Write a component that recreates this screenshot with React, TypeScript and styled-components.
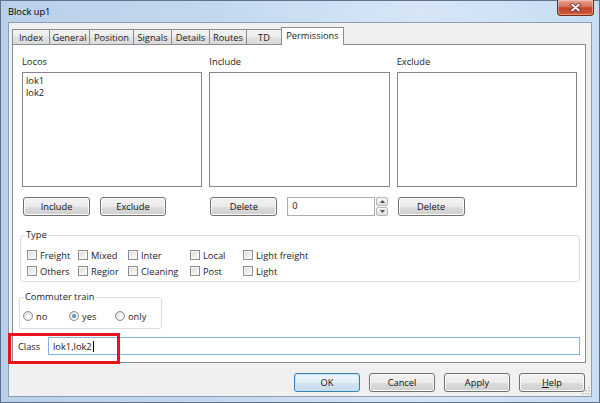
import React from 'react';
import styled, { createGlobalStyle } from 'styled-components';

const GlobalStyle = createGlobalStyle`
  html, body {
    margin: 0;
    padding: 0;
    background: #ffffff;
  }
  body {
    font-family: 'Open Sans', 'Noto Sans', sans-serif;
    font-size: 9.3px;
    color: #1b1b1b;
  }
  * {
    box-sizing: border-box;
  }
`;

const Window = styled.div`
  position: relative;
  width: 600px;
  height: 403px;
  display: flex;
  flex-direction: column;
  background: linear-gradient(90deg, #b9d0ea 0%, #c3d8ee 35%, #d6e6f7 70%, #c8dcf1 100%);
  box-shadow: inset 0 0 0 1px #62728a;
  overflow: hidden;
`;

const TitleBar = styled.div`
  height: 22px;
  display: flex;
  align-items: flex-start;
  padding-left: 8px;
`;

const Title = styled.span`
  line-height: 24px;
  color: #000;
`;

const CloseButton = styled.div`
  margin-left: auto;
  margin-right: 6px;
  width: 37px;
  height: 16px;
  border: 1px solid #6e2a1d;
  border-top: none;
  border-radius: 0 0 4px 4px;
  background: linear-gradient(#e8a594 0%, #d7705a 45%, #c2412a 52%, #cf5a3e 100%);
  box-shadow: inset 0 0 0 1px rgba(255, 210, 200, 0.5);
  display: flex;
  align-items: center;
  justify-content: center;
`;

const Client = styled.div`
  position: relative;
  flex: 1;
  margin: 0 8px 6px 8px;
  border: 1px solid #8e9fb5;
  background: #f0f0f0;
  padding: 4px 5px 4px 3px;
  display: flex;
  flex-direction: column;
`;

const TabStrip = styled.div`
  position: relative;
  z-index: 1;
  height: 18px;
  display: flex;
  align-items: flex-end;
`;

const Tab = styled.div<{ $w: number; $active?: boolean }>`
  width: ${({ $w }) => $w}px;
  height: ${({ $active }) => ($active ? 18 : 15)}px;
  margin-bottom: ${({ $active }) => ($active ? 0 : 1)}px;
  margin-left: -1px;
  border: 1px solid #898c95;
  border-bottom: none;
  background: ${({ $active }) =>
    $active ? '#ffffff' : 'linear-gradient(#f4f4f4, #ebebeb 50%, #e2e2e2 51%, #dadada)'};
  display: flex;
  align-items: center;
  justify-content: center;
  padding-bottom: ${({ $active }) => ($active ? 2 : 0)}px;
  &:first-child {
    margin-left: 0;
  }
`;

const Page = styled.div`
  position: relative;
  z-index: 0;
  flex: 1;
  margin-top: -1px;
  border: 1px solid #898c95;
  background: #ffffff;
  padding: 11px 5px 6px 6px;
  display: flex;
  flex-direction: column;
`;

const Columns = styled.div`
  display: grid;
  grid-template-columns: repeat(3, 1fr);
  column-gap: 7px;
  padding: 0 3px;
`;

const Column = styled.div`
  display: flex;
  flex-direction: column;
`;

const Caption = styled.div`
  height: 12px;
  line-height: 12px;
  margin-bottom: 4px;
`;

const ListBox = styled.div`
  height: 115px;
  border: 1px solid #828790;
  background: #fff;
  padding: 2px 3px;
`;

const ListItem = styled.div`
  line-height: 12px;
`;

const ButtonCell = styled.div`
  display: flex;
  gap: 10px;
  padding-left: 1px;
  margin-top: 10px;
`;

const Button = styled.div<{ $w?: number; $default?: boolean }>`
  width: ${({ $w }) => $w ?? 67}px;
  height: 19px;
  border: 1px solid ${({ $default }) => ($default ? '#3c7fb1' : '#707070')};
  border-radius: 3px;
  background: ${({ $default }) =>
    $default
      ? 'linear-gradient(#eef6fb 0%, #e3eff7 50%, #d2e3ef 51%, #c7dbea 100%)'
      : 'linear-gradient(#f2f2f2 0%, #ebebeb 50%, #dddddd 51%, #cfcfcf 100%)'};
  box-shadow: inset 0 0 0 1px ${({ $default }) => ($default ? '#bfe2f6' : '#fbfbfb')};
  display: flex;
  align-items: center;
  justify-content: center;
  color: #111;
`;

const Spin = styled.div`
  width: 101px;
  height: 19px;
  display: flex;
`;

const SpinField = styled.div`
  flex: 1;
  border: 1px solid #abadb3;
  background: #fff;
  padding-left: 4px;
  line-height: 16px;
`;

const SpinButtons = styled.div`
  width: 12px;
  display: flex;
  flex-direction: column;
  gap: 1px;
  margin-left: 1px;
`;

const SpinButton = styled.div`
  flex: 1;
  border: 1px solid #b5b7bb;
  border-radius: 2px;
  background: linear-gradient(#f6f6f6, #dedede);
  display: flex;
  align-items: center;
  justify-content: center;
`;

const Group = styled.fieldset<{ $top: number; $pl: number }>`
  margin: ${({ $top }) => $top}px 0 0 0;
  padding: 6px 4px 2px ${({ $pl }) => $pl}px;
  border: 1px solid #d5dfe5;
  border-radius: 3px;
  min-width: 0;
`;

const TypeGroup = styled(Group)`
  margin-left: 1px;
`;

const CommuterGroup = styled(Group)`
  width: 143px;
  padding-bottom: 5px;
`;

const Legend = styled.legend<{ $shift: number }>`
  padding: 0 1px;
  margin-left: ${({ $shift }) => $shift}px;
  line-height: 12px;
  height: 12px;
`;

const CheckGrid = styled.div`
  display: grid;
  grid-template-columns: 51px 50px 62px 53px 1fr;
  grid-auto-rows: 16px;
`;

const RadioRow = styled.div`
  display: grid;
  grid-template-columns: 46px 46px 46px;
  height: 14px;
`;

const Option = styled.label`
  display: flex;
  align-items: center;
  gap: 2px;
  white-space: nowrap;
`;

const CheckBox = styled.span`
  width: 10px;
  height: 10px;
  flex: none;
  margin-right: 1px;
  border: 1px solid #8e8f8f;
  background: linear-gradient(135deg, #d9d9d9 0%, #f2f2f2 60%, #ffffff 100%);
  box-shadow: inset 0 0 0 1px #f4f4f4;
`;

const Radio = styled.span<{ $checked?: boolean }>`
  width: 10px;
  height: 10px;
  flex: none;
  margin-right: 1px;
  border: 1px solid #8e8f8f;
  border-radius: 50%;
  background: radial-gradient(circle at 60% 65%, #ffffff 0%, #e6e6e6 60%, #cfcfcf 100%);
  display: flex;
  align-items: center;
  justify-content: center;
  &::after {
    content: '';
    display: ${({ $checked }) => ($checked ? 'block' : 'none')};
    width: 4px;
    height: 4px;
    border-radius: 50%;
    background: radial-gradient(circle at 35% 35%, #7fb0d8, #2a5a87);
  }
`;

const ClassRow = styled.div`
  margin-top: 8px;
  height: 18px;
  display: flex;
  align-items: center;
`;

const ClassLabel = styled.span`
  width: 30px;
  margin-left: -1px;
`;

const TextBox = styled.div`
  flex: 1;
  height: 18px;
  border: 1px solid #7eb4ea;
  background: #fff;
  padding-left: 4px;
  display: flex;
  align-items: center;
`;

const Caret = styled.span`
  width: 1px;
  height: 11px;
  background: #000;
  margin-left: 1px;
`;

const ButtonBar = styled.div`
  margin-top: 10px;
  margin-right: 1px;
  display: flex;
  justify-content: flex-end;
  gap: 9px;
`;

const Grip = styled.svg`
  position: absolute;
  right: 1px;
  bottom: 1px;
`;

const Highlight = styled.div`
  position: absolute;
  left: 8px;
  top: 333px;
  width: 112px;
  height: 31px;
  border: 3px solid #e8131b;
  pointer-events: none;
`;

const tabs: [string, number][] = [
  ['Index', 38],
  ['General', 41],
  ['Position', 45],
  ['Signals', 39],
  ['Details', 39],
  ['Routes', 38],
  ['TD', 36],
];

const types = [
  'Freight',
  'Mixed',
  'Inter',
  'Local',
  'Light freight',
  'Others',
  'Regior',
  'Cleaning',
  'Post',
  'Light',
];

export default function App() {
  return (
    <>
      <GlobalStyle />
      <Window>
        <TitleBar>
          <Title>Block up1</Title>
          <CloseButton>
            <svg width="11" height="9" viewBox="0 0 11 9">
              <path d="M2 1.5 L9 7.5 M9 1.5 L2 7.5" stroke="#5a2a22" strokeWidth="3.4" strokeLinecap="round" />
              <path d="M2 1.5 L9 7.5 M9 1.5 L2 7.5" stroke="#ffffff" strokeWidth="1.8" strokeLinecap="round" />
            </svg>
          </CloseButton>
        </TitleBar>
        <Client>
          <TabStrip>
            {tabs.map(([name, w]) => (
              <Tab key={name} $w={w}>
                {name}
              </Tab>
            ))}
            <Tab $w={63} $active>
              Permissions
            </Tab>
          </TabStrip>
          <Page>
            <Columns>
              <Column>
                <Caption>Locos</Caption>
                <ListBox>
                  <ListItem>lok1</ListItem>
                  <ListItem>lok2</ListItem>
                </ListBox>
                <ButtonCell>
                  <Button>Include</Button>
                  <Button $w={66}>Exclude</Button>
                </ButtonCell>
              </Column>
              <Column>
                <Caption>Include</Caption>
                <ListBox />
                <ButtonCell>
                  <Button>Delete</Button>
                  <Spin>
                    <SpinField>0</SpinField>
                    <SpinButtons>
                      <SpinButton>
                        <svg width="5" height="3" viewBox="0 0 5 3">
                          <path d="M0 3 L2.5 0 L5 3 Z" fill="#4d4d4d" />
                        </svg>
                      </SpinButton>
                      <SpinButton>
                        <svg width="5" height="3" viewBox="0 0 5 3">
                          <path d="M0 0 L2.5 3 L5 0 Z" fill="#4d4d4d" />
                        </svg>
                      </SpinButton>
                    </SpinButtons>
                  </Spin>
                </ButtonCell>
              </Column>
              <Column>
                <Caption>Exclude</Caption>
                <ListBox />
                <ButtonCell>
                  <Button>Delete</Button>
                </ButtonCell>
              </Column>
            </Columns>

            <TypeGroup $top={13} $pl={6}>
              <Legend $shift={-2}>Type</Legend>
              <CheckGrid>
                {types.map((t) => (
                  <Option key={t}>
                    <CheckBox />
                    {t}
                  </Option>
                ))}
              </CheckGrid>
            </TypeGroup>

            <CommuterGroup $top={9} $pl={3}>
              <Legend $shift={1}>Commuter train</Legend>
              <RadioRow>
                <Option>
                  <Radio />
                  no
                </Option>
                <Option>
                  <Radio $checked />
                  yes
                </Option>
                <Option>
                  <Radio />
                  only
                </Option>
              </RadioRow>
            </CommuterGroup>

            <ClassRow>
              <ClassLabel>Class</ClassLabel>
              <TextBox>
                lok1,lok2
                <Caret />
              </TextBox>
            </ClassRow>
          </Page>
          <ButtonBar>
            <Button $w={66} $default>
              OK
            </Button>
            <Button $w={66}>Cancel</Button>
            <Button $w={66}>Apply</Button>
            <Button $w={66}>
              <u>H</u>elp
            </Button>
          </ButtonBar>
          <Grip width="9" height="9" viewBox="0 0 9 9">
            {[
              [7, 1],
              [7, 4],
              [4, 4],
              [7, 7],
              [4, 7],
              [1, 7],
            ].map(([x, y]) => (
              <rect key={`${x}-${y}`} x={x} y={y} width="1.5" height="1.5" fill="#b8bcc4" />
            ))}
          </Grip>
        </Client>
        <Highlight />
      </Window>
    </>
  );
}
